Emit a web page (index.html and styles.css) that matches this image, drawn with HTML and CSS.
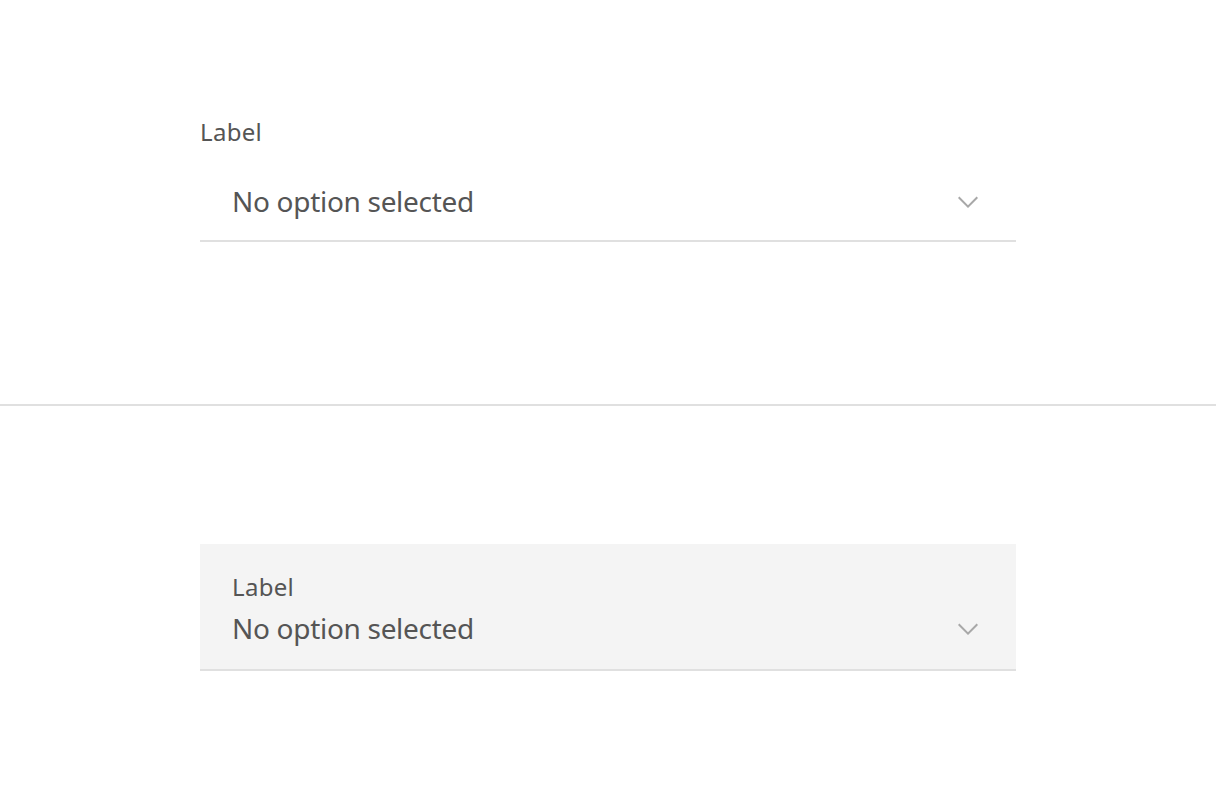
FILE: index.html
```html
<!DOCTYPE html>
<html lang="en">
<head>
<meta charset="utf-8">
<title>Select</title>
<link rel="stylesheet" href="styles.css">
</head>
<body>
<main class="page">
  <section class="panel panel-top">
    <div class="field">
      <span class="label">Label</span>
      <div class="select">
        <span class="value">No option selected</span>
        <svg class="chevron" viewBox="0 0 16 16" width="32" height="32" aria-hidden="true"><path d="M8 11L3 6 3.7 5.3 8 9.6 12.3 5.3 13 6z"/></svg>
      </div>
    </div>
  </section>
  <div class="divider"></div>
  <section class="panel panel-bottom">
    <div class="fluid">
      <span class="label">Label</span>
      <div class="fluid-row">
        <span class="value">No option selected</span>
        <svg class="chevron" viewBox="0 0 16 16" width="32" height="32" aria-hidden="true"><path d="M8 11L3 6 3.7 5.3 8 9.6 12.3 5.3 13 6z"/></svg>
      </div>
    </div>
  </section>
</main>
</body>
</html>
```
FILE: styles.css
```css
html, body {
  margin: 0;
  padding: 0;
  background: #ffffff;
}
body {
  font-family: "Noto Sans", "Open Sans", sans-serif;
  color: #525252;
}
.page {
  display: flex;
  flex-direction: column;
}
.panel {
  box-sizing: border-box;
  padding: 0 200px;
}
.panel-top {
  height: 404px;
  padding-top: 116px;
}
.panel-bottom {
  height: 404px;
  padding-top: 138px;
}
.divider {
  height: 2px;
  background: #e0e0e0;
}
.field {
  display: flex;
  flex-direction: column;
}
.label {
  display: block;
  font-size: 24px;
  line-height: 32px;
  letter-spacing: 0.3px;
  color: #555555;
}
.select {
  margin-top: 14px;
  box-sizing: border-box;
  height: 80px;
  padding: 0 32px;
  border-bottom: 2px solid #e0e0e0;
  display: flex;
  align-items: center;
  justify-content: space-between;
}
.value {
  font-size: 28px;
  line-height: 32px;
  letter-spacing: -0.3px;
  color: #555555;
}
.chevron {
  display: block;
  fill: #a8a8a8;
  flex: none;
  margin-top: 2px;
}
.fluid {
  box-sizing: border-box;
  height: 127px;
  background: #f4f4f4;
  border-bottom: 2px solid #e0e0e0;
  padding: 27px 32px 0 32px;
  display: flex;
  flex-direction: column;
}
.fluid-row {
  margin-top: 8px;
  display: flex;
  align-items: center;
  justify-content: space-between;
}
```
